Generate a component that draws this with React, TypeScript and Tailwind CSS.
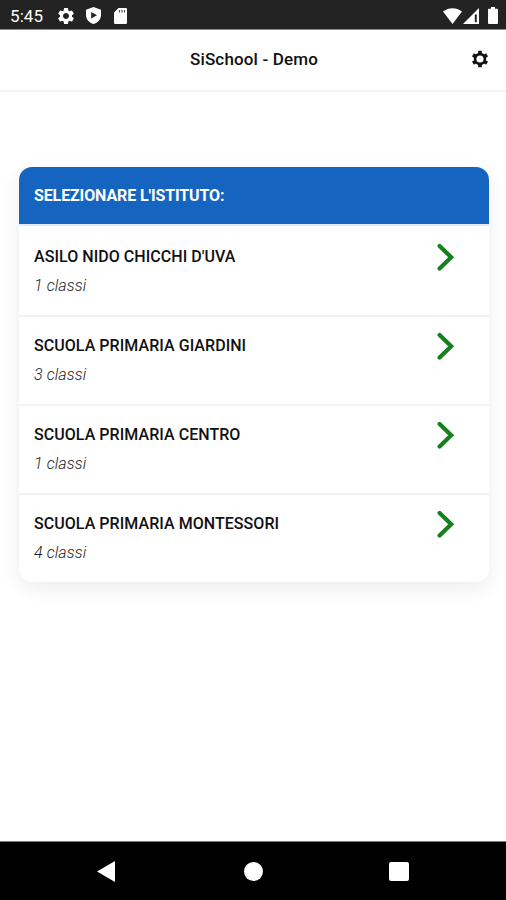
import React from 'react';
import { MdSettings } from 'react-icons/md';

interface School {
  name: string;
  classes: number;
}

const schools: School[] = [
  { name: "ASILO NIDO CHICCHI D'UVA", classes: 1 },
  { name: 'SCUOLA PRIMARIA GIARDINI', classes: 3 },
  { name: 'SCUOLA PRIMARIA CENTRO', classes: 1 },
  { name: 'SCUOLA PRIMARIA MONTESSORI', classes: 4 },
];

const StatusBar: React.FC = () => (
  <div className="flex h-[30px] shrink-0 items-center justify-between border-b border-[#8a8a8a] bg-[#232323] pt-[2px] pl-[10px] pr-2 text-white">
    <div className="flex items-center">
      <span className="w-[46px] text-[17px] leading-5 tracking-[0.1px]">5:45</span>
      <MdSettings className="h-[20px] w-[20px]" />
      <svg className="ml-[10px] h-[17px] w-[15px]" viewBox="0 0 15 17">
        <path fill="currentColor" d="M7.5 0 15 2.8V8c0 4.300-3.200 7.800-7.500 9C3.200 15.800 0 12.300 0 8V2.800z" />
        <path fill="#232323" d="M5.200 5v6.400L11 8.200z" />
      </svg>
      <svg className="ml-[13px] h-[16px] w-[13px]" viewBox="0 0 13 16">
        <path fill="currentColor" d="M4.500 0H11.700Q13 0 13 1.300V14.700Q13 16 11.700 16H1.300Q0 16 0 14.700V4.500z" />
        <path stroke="#555" strokeWidth="1.200" d="M5.500 2v2.500M8 2v2.500M10.500 2v2.500" />
      </svg>
    </div>
    <div className="flex items-center">
      <svg className="h-[16px] w-[19px]" viewBox="0 0 19 16">
        <path fill="currentColor" d="M0 3.500C5.500-1 13.500-1 19 3.500L9.500 16z" />
      </svg>
      <svg className="ml-[1px] h-[16px] w-[16px]" viewBox="0 0 16 16">
        <path fill="currentColor" fillRule="evenodd" d="M16 0V16H0zM11.800 6.500v7.800h2V6.500z" />
      </svg>
      <svg className="ml-[9px] h-[17px] w-[10px]" viewBox="0 0 10 17">
        <path fill="currentColor" d="M3 0h4v1.800h2q1 0 1 1V16q0 1-1 1H1q-1 0-1-1V2.800q0-1 1-1h2z" />
      </svg>
    </div>
  </div>
);

const SchoolRow: React.FC<{ school: School }> = ({ school }) => (
  <button className="flex h-[89px] w-full items-start justify-between border-t-2 border-[#f2f2f2] pt-[17px] pr-[34px] pl-[15px] text-left first:h-[91px] first:border-[#e3edf8] first:pt-[19px]">
    <div>
      <p className="text-[16px] leading-[24px] font-medium tracking-[0.05px] whitespace-nowrap text-[#111]">{school.name}</p>
      <p className="mt-[5px] text-[16px] leading-[24px] font-light tracking-[0.1px] text-[#222] italic">{school.classes} classi</p>
    </div>
    <svg className="-mt-[2px] h-[28px] w-[18px]" viewBox="0 0 18 28" fill="none">
      <path stroke="#15801d" strokeWidth="4.200" strokeLinecap="round" d="M2.600 3 14.200 14.300 2.600 25.600" />
    </svg>
  </button>
);

const App: React.FC = () => {
  return (
    <div className="flex h-screen w-full flex-col overflow-hidden bg-white font-['Roboto',sans-serif]">
      <StatusBar />

      <header className="grid h-[62px] shrink-0 grid-cols-[1fr_auto_1fr] items-center border-b-2 border-[#f2f2f2]">
        <h1 className="col-start-2 pl-[2px] text-[17px] font-medium tracking-[0.15px] whitespace-nowrap text-[#111]">SiSchool - Demo</h1>
        <svg className="mr-[17px] mb-[3px] h-[18px] w-[18px] justify-self-end text-[#111]" viewBox="0 0 18 18" fill="none" stroke="currentColor">
          <circle cx="9" cy="9" r="4.900" strokeWidth="2.600" />
          <path strokeWidth="3.600" d="M9 .8v2.700M9 14.500v2.700M1.900 4.900l2.340 1.350M13.760 11.750l2.340 1.350M1.900 13.100l2.340-1.350M13.760 6.250l2.340-1.350" />
        </svg>
      </header>

      <main className="flex-1 pt-[75px] pr-[17px] pl-[19px]">
        <section className="overflow-hidden rounded-[13px] bg-white shadow-[0_6px_20px_rgba(0,0,0,0.08)]">
          <div className="flex h-[57px] items-center bg-[#1565c0] pl-[15px] text-[16px] font-bold tracking-[-0.12px] text-white">
            SELEZIONARE L'ISTITUTO:
          </div>
          <div>
            {schools.map((school) => (
              <SchoolRow key={school.name} school={school} />
            ))}
          </div>
        </section>
      </main>

      {/* Android navigation */}
      <nav className="flex h-[59px] shrink-0 items-center justify-between border-t border-[#777] bg-black px-[97px] text-white">
        <svg className="h-[21px] w-[18px]" viewBox="0 0 18 21">
          <path fill="currentColor" d="M18 0v21L0 10.500z" />
        </svg>
        <div className="ml-[3px] h-[19px] w-[19px] rounded-full bg-white" />
        <div className="h-[19px] w-[20px] rounded-[2px] bg-white" />
      </nav>
    </div>
  );
};

export default App;
